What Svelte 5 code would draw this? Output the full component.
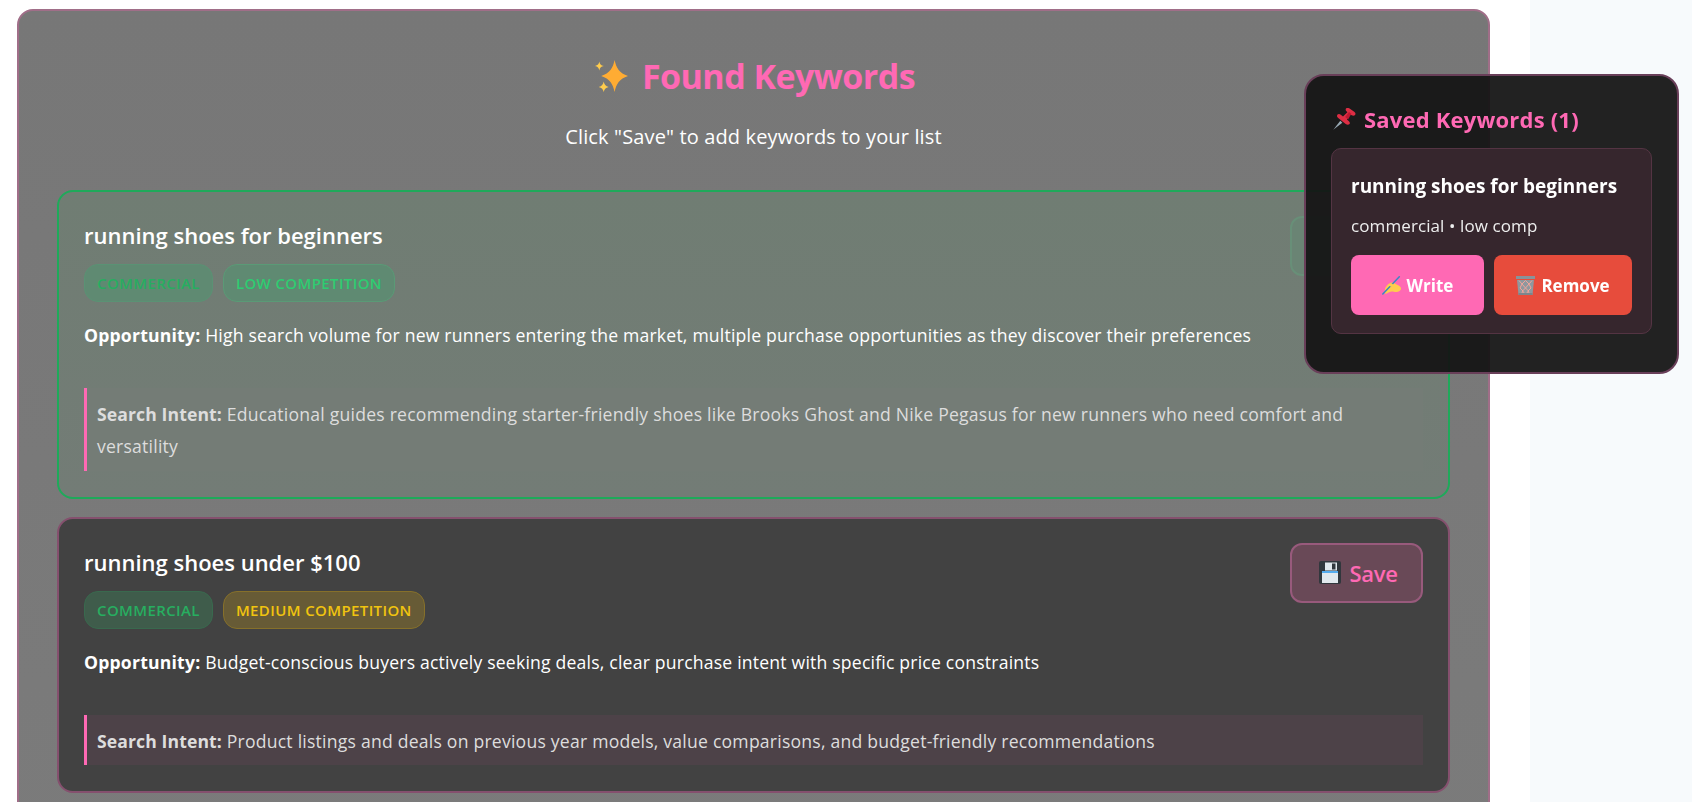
<script>
  const keywords = [
    {
      title: 'running shoes for beginners',
      saved: true,
      competition: 'low competition',
      level: 'low',
      opportunity: 'High search volume for new runners entering the market, multiple purchase opportunities as they discover their preferences',
      intent: 'Educational guides recommending starter-friendly shoes like Brooks Ghost and Nike Pegasus for new runners who need comfort and versatility'
    },
    {
      title: 'running shoes under $100',
      saved: false,
      competition: 'medium competition',
      level: 'medium',
      opportunity: 'Budget-conscious buyers actively seeking deals, clear purchase intent with specific price constraints',
      intent: 'Product listings and deals on previous year models, value comparisons, and budget-friendly recommendations'
    }
  ];
</script>

<div class="page">
  <main class="main">
    <section class="panel">
      <h2 class="heading">
        <svg class="sparkle" viewBox="0 0 33 32" aria-hidden="true">
          <path fill="#ffac33" d="M19.600 0c1.600 8 4.800 13.200 13.400 16-8.600 2.800-11.800 8-13.400 16-1.600-8-4.800-13.200-13.400-16 8.600-2.800 11.800-8 13.400-16z"/>
          <path fill="#ffcc4d" d="M4.300 1.500c.5 2.700 1.500 3.800 4.500 4.500-3 .7-4 1.800-4.500 4.500C3.800 7.800 2.800 6.700-.2 6c3-.7 4-1.800 4.500-4.500zM8.700 21.500c.6 3.200 1.800 4.600 5 5.500-3.200.9-4.400 2.200-5 5-.6-2.800-1.800-4.100-5-5 3.200-.9 4.400-2.300 5-5.500z"/>
        </svg>
        <span>Found Keywords</span>
      </h2>
      <p class="sub">Click "Save" to add keywords to your list</p>

      {#each keywords as k}
        <article class="card" class:saved={k.saved}>
          <div class="head">
            <div>
              <h3 class="title">{k.title}</h3>
              <div class="tags">
                <span class="tag commercial">commercial</span>
                <span class="tag {k.level}">{k.competition}</span>
              </div>
            </div>
            <button class="save">
              <svg class="floppy" viewBox="0 0 22 23" aria-hidden="true">
                <rect x="0" y="0" width="22" height="23" rx="2" fill="#31373d"/>
                <rect x="6" y="1.500" width="12" height="8" fill="#e1e8ed"/>
                <rect x="13" y="2.500" width="3.500" height="6" fill="#31373d"/>
                <rect x="3" y="11" width="16" height="11" fill="#e1e8ed"/>
                <rect x="3" y="10" width="16" height="2" fill="#55acee"/>
              </svg>
              Save
            </button>
          </div>
          <p class="opp"><strong>Opportunity:</strong> {k.opportunity}</p>
          <p class="intent"><strong>Search Intent:</strong> {k.intent}</p>
        </article>
      {/each}
    </section>
  </main>
  <aside class="side"></aside>

  <div class="float">
    <h3 class="float-title">
      <svg class="pin" viewBox="8 7.500 23 23" aria-hidden="true">
        <path fill="#99aab5" d="M8.300 29.300l7-9 2 2z"/>
        <path fill="#dd2e44" d="M12.300 14.500c-.8 1.200 0 2.300.9 3l7.500 6c1.200.9 3 1.100 3.800 0 .8-1 .2-2.200-.8-3l-1.800-1.500 3-5.300 1.800 1c1.200.8 2.800.6 3.500-.5.700-1 0-2.200-1-2.900l-5-3.500c-1.100-.7-2.500-.7-3.200.3-.7 1-.2 2.200.7 3l.7.600-4.400 4.300-2.200-1.800c-1-.8-2.700-1-3.500.1z"/>
        <path fill="#be1931" d="M24 11.500l2.300 1.800-3.200 5.700-3-2.400z"/>
      </svg>
      Saved Keywords (1)
    </h3>
    <div class="saved-item">
      <div class="saved-name">running shoes for beginners</div>
      <div class="saved-meta">commercial • low comp</div>
      <div class="actions">
        <button class="act write">
          <svg class="hand" viewBox="0 0 19 19" aria-hidden="true">
            <path fill="#ffcc4d" d="M3.500 11.500c1.500-2.500 3.500-4.500 6-5 1.500-.3 3.500 1 5 2 2.500 1 4.500 2 4.500 4s-2.500 3.500-5 3.500c-1.500 0-3-.5-4-.5-2 0-4 1.500-6 2.200-1 .3-2-.6-1.500-1.700.5-1.300.2-2.800 1-4.500z"/>
            <path fill="none" stroke="#3b88c3" stroke-width="1.500" stroke-linecap="round" d="M.8 18L17.300.8"/>
            <path fill="#ffcc4d" d="M7.500 8c1.500-.5 3.500 0 4 1.200.3 1-1.500 1.500-3 1.300-1.500-.2-2.500-1.800-1-2.500z"/>
          </svg>
          Write
        </button>
        <button class="act remove">
          <svg class="bin" viewBox="0 0 19 19" aria-hidden="true">
            <path fill="#8e989e" d="M1 4h17l-1.500 15h-14z"/>
            <path fill="none" stroke="#f0a49b" stroke-width="1" d="M3 4.500l3 3.500-2 4 3 3-2 3.500M9.500 4.500L6 8l3.500 4L6.500 15l3 3.500M9.500 4.500L13 8l-3.500 4 3 3-3 3.500M16 4.500L13 8l2 4-3 3 2 3.500"/>
            <rect x="0" y="0" width="19" height="3" fill="#88939a"/>
            <rect x="2.500" y="17" width="14" height="2" fill="#7c858c"/>
          </svg>
          Remove
        </button>
      </div>
    </div>
  </div>
</div>

<style>
  :global(body) {
    margin: 0;
    background: #fff;
  }
  .page {
    display: flex;
    height: 802px;
    overflow: hidden;
    font-family: "Open Sans", "Noto Sans", sans-serif;
    color: #fff;
  }
  .main {
    flex: 1;
    min-width: 0;
    padding: 9px 40px 0 17px;
  }
  .side {
    width: 162px;
    flex: none;
    background: #f7fafc;
  }
  .panel {
    box-sizing: border-box;
    min-height: 900px;
    padding: 38px 38px;
    background: linear-gradient(180deg, #777, #7b7b7b);
    border: 2px solid #a06e88;
    border-radius: 16px;
  }
  .heading {
    margin: 0;
    padding-left: 3px;
    color: #ff69b4;
    font-size: 34px;
    line-height: 54px;
    font-weight: 700;
    letter-spacing: -0.55px;
    display: flex;
    justify-content: center;
    align-items: center;
    gap: 14px;
  }
  .sparkle { width: 33px; height: 32px; flex: none; }
  .sub {
    margin: 18px 0 37px;
    text-align: center;
    font-size: 20px;
    line-height: 32px;
    letter-spacing: 0.14px;
  }
  .card {
    box-sizing: border-box;
    background: #424242;
    border: 2px solid #85506e;
    border-radius: 16px;
    padding: 24px 25px 26px 25px;
    margin-bottom: 18px;
  }
  .card.saved {
    background: linear-gradient(180deg, #707d73, #737c76);
    border-color: #1eaa5a;
  }
  .head {
    display: flex;
    justify-content: space-between;
    align-items: flex-start;
  }
  .title {
    margin: 0 0 9px;
    font-size: 22px;
    line-height: 39px;
    font-weight: 600;
  }
  .tags { display: flex; gap: 10px; }
  .tag {
    box-sizing: border-box;
    height: 38px;
    padding: 0 12px;
    display: flex;
    align-items: center;
    border: 1px solid;
    border-radius: 14px;
    font-size: 15px;
    font-weight: 600;
    text-transform: uppercase;
    letter-spacing: 0.38px;
  }
  .commercial { color: #27ae60; background: #3f5c4b; border-color: #39694e; }
  .medium { color: #f1c40f; background: #675b36; border-color: #86702a; }
  .saved .commercial { color: #27ae60; background: #5f8a72; border-color: #5a9274; }
  .saved .low { color: #2ecc71; background: #5f8a72; border-color: #5a9a76; }
  .save {
    box-sizing: border-box;
    width: 133px;
    height: 60px;
    padding: 0 0 0 4px;
    display: flex;
    align-items: center;
    justify-content: center;
    gap: 8px;
    font: inherit;
    font-size: 22px;
    font-weight: 600;
    letter-spacing: -0.3px;
    color: #ff69b4;
    background: #694957;
    border: 2px solid #985a7c;
    border-radius: 12px;
    flex: none;
  }
  .card.saved .save {
    background: #6a8474;
    border-color: #688f78;
    color: transparent;
  }
  .card.saved .save svg { visibility: hidden; }
  .floppy { width: 22px; height: 23px; flex: none; }
  .opp {
    margin: 17px 0 0;
    font-size: 17.600px;
    line-height: 32px;
    letter-spacing: 0.2px;
  }
  .opp strong, .intent strong { font-weight: 700; }
  .intent {
    margin: 37px 0 0;
    padding: 11px 9.600px 8.200px 10px;
    border-left: 3px solid #ff69b4;
    background: #4d4248;
    color: #ddd;
    font-size: 17.600px;
    line-height: 31.680px;
    letter-spacing: 0.22px;
  }
  .intent strong { letter-spacing: 0.1px; }
  .saved .intent { background: #747c76; }
  .float {
    position: fixed;
    top: 74px;
    left: 1304px;
    box-sizing: border-box;
    width: 375px;
    height: 300px;
    padding: 24px 25px;
    background: rgba(20, 20, 20, 0.94);
    border: 2px solid #693f59;
    border-radius: 20px;
  }
  .float-title {
    margin: 0 0 10px;
    display: flex;
    align-items: center;
    gap: 8px;
    color: #ff69b4;
    font-size: 22px;
    line-height: 38px;
    font-weight: 700;
    letter-spacing: 0.2px;
  }
  .pin { width: 23px; height: 23px; flex: none; margin-left: 2px; }
  .saved-item {
    box-sizing: border-box;
    height: 186px;
    padding: 19px 19px;
    background: #36262d;
    border: 1px solid #543443;
    border-radius: 10px;
  }
  .saved-name {
    font-size: 19px;
    line-height: 36px;
    font-weight: 700;
  }
  .saved-meta {
    margin-top: 9px;
    font-size: 17px;
    line-height: 26px;
    letter-spacing: 0.1px;
    color: #eee;
  }
  .actions { display: flex; gap: 10px; margin-top: 16px; }
  .act {
    box-sizing: border-box;
    height: 60px;
    display: flex;
    align-items: center;
    justify-content: center;
    gap: 6px;
    border: 0;
    border-radius: 8px;
    color: #fff;
    font: inherit;
    font-size: 17px;
    font-weight: 700;
  }
  .write { width: 133px; background: #ff69b4; }
  .remove { width: 138px; background: #e74c3c; }
  .hand, .bin { width: 19px; height: 19px; flex: none; }
</style>
